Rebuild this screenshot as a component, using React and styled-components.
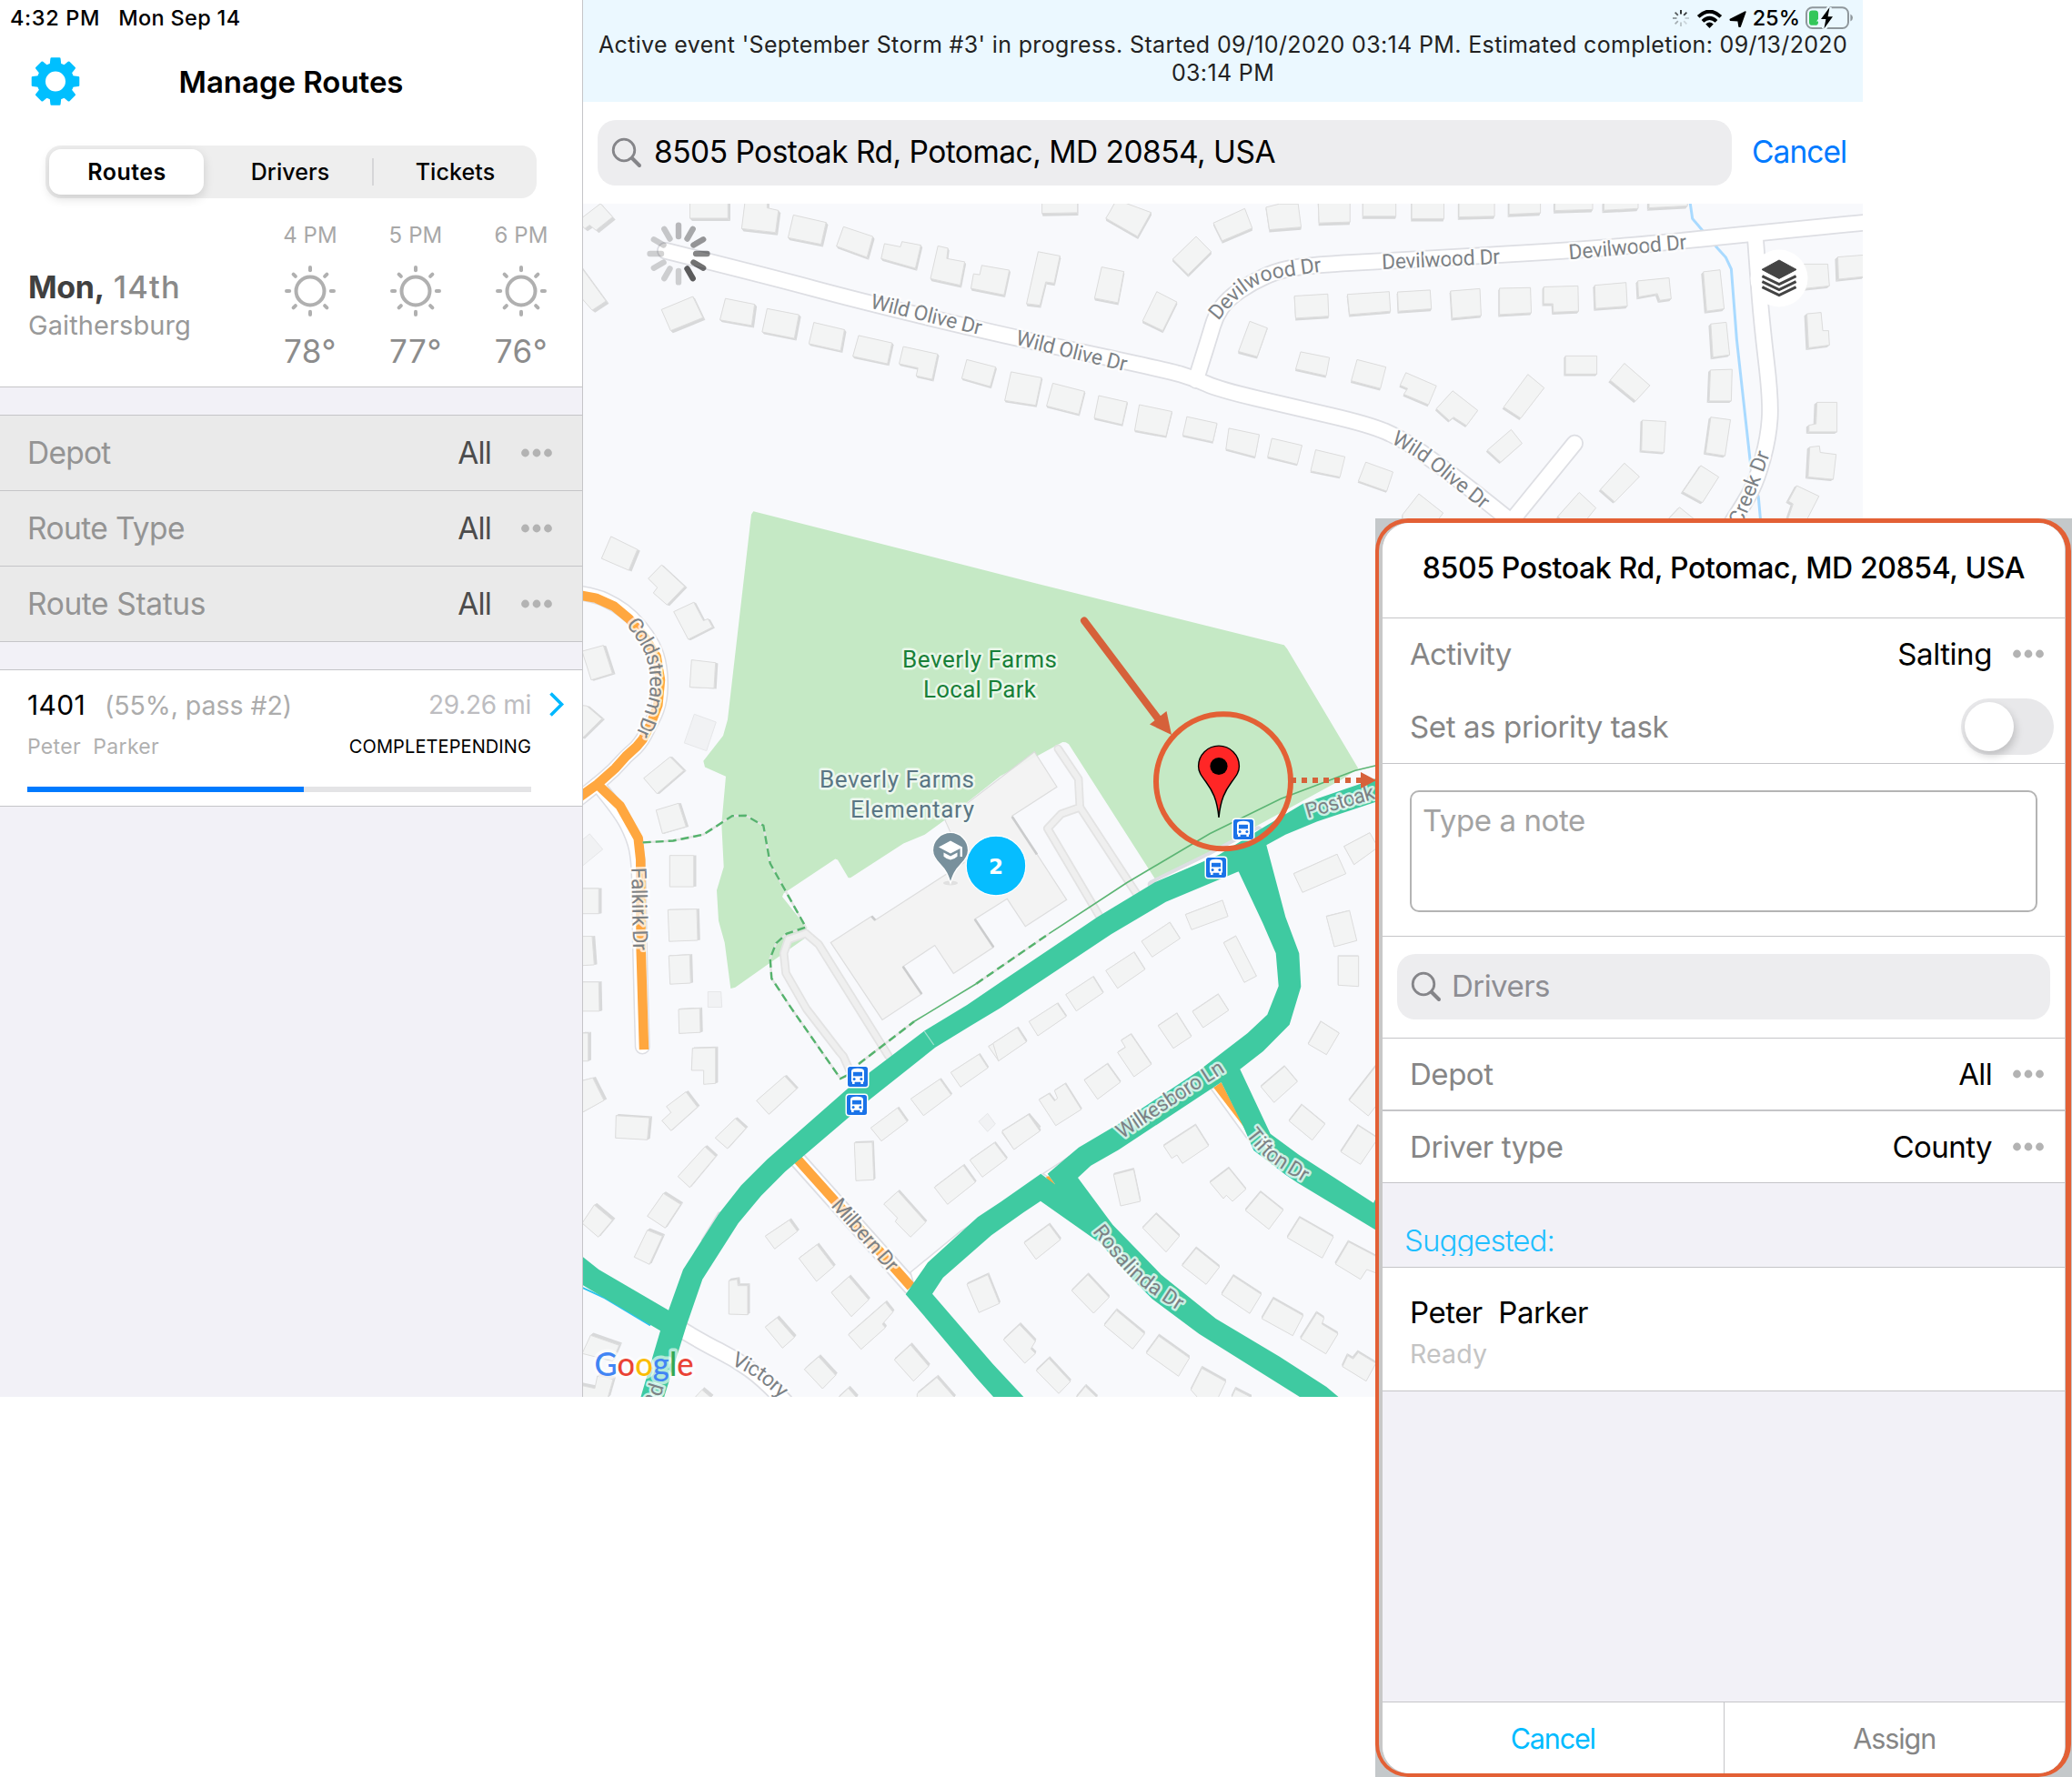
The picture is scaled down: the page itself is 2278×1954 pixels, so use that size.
import React from "react";
import styled, { createGlobalStyle, css } from "styled-components";

const GlobalStyle = createGlobalStyle`
  *, *::before, *::after { box-sizing: border-box; }
  html, body { margin: 0; padding: 0; background: #fff; }
  body { font-family: Inter, "Liberation Sans", sans-serif; color: #000; }
  button, input, textarea { font: inherit; border: 0; background: none; padding: 0; margin: 0; outline: 0; }
`;

const hairline = "#c5c5c8";
const groupBg = "#f2f1f7";
const orange = "#e36035";

const type = css`
  font-size: ${(p) => p.$size}px;
  font-weight: ${(p) => p.$weight || 400};
  letter-spacing: ${(p) => p.$track || 0}em;
  color: ${(p) => p.$color || "#000"};
  white-space: pre;
`;

const Text = styled.span`${type}`;

/* ---------- shell ---------- */

const Page = styled.div`
  position: relative;
  width: 2278px;
  height: 1954px;
  overflow: hidden;
  background: #fff;
`;

const Screen = styled.div`
  display: flex;
  width: 2048px;
  height: 1536px;
`;

const Sidebar = styled.aside`
  display: flex;
  flex-direction: column;
  width: 641px;
  flex: none;
  background: ${groupBg};
  border-right: 1px solid ${hairline};
`;

const Main = styled.main`
  display: flex;
  flex-direction: column;
  width: 1407px;
  flex: none;
`;

/* ---------- sidebar ---------- */

const SidebarTop = styled.header`
  display: flex;
  flex-direction: column;
  height: 426px;
  background: #fff;
  border-bottom: 1px solid ${hairline};
`;

const StatusLine = styled.div`
  display: flex;
  align-items: center;
  gap: 20px;
  height: 39px;
  padding-left: 11px;
`;

const TitleBar = styled.div`
  display: grid;
  grid-template-columns: 122px 1fr 122px;
  align-items: center;
  justify-items: center;
  height: 101px;
`;

const Segmented = styled.div`
  display: flex;
  align-items: center;
  height: 58px;
  margin: 20px 50px 0;
  padding-left: 4px;
  border-radius: 17px;
  background: #eee;
`;

const Segment = styled.button`
  ${type}
  width: ${(p) => p.$width}px;
  height: 50px;
  padding-left: ${(p) => p.$nudge || 0}px;
  line-height: 50px;
  text-align: center;
  border-radius: 13px;
  ${(p) => p.$active && css`
    background: #fff;
    box-shadow: 0 4px 12px rgba(0, 0, 0, 0.14);
  `}
`;

const SegmentDivider = styled.i`
  width: 2px;
  height: 30px;
  background: #d6d6d8;
`;

const Weather = styled.section`
  display: flex;
`;

const WeatherPlace = styled.div`
  display: flex;
  flex-direction: column;
  gap: 4px;
  width: 283px;
  padding: 78px 0 0 31px;
  line-height: 36px;
`;

const WeatherDate = styled.div`
  display: flex;
  gap: 10px;
  line-height: 40px;
`;

const Hour = styled.div`
  display: flex;
  flex-direction: column;
  align-items: center;
  width: 116px;
  padding-top: 26px;
  line-height: 40px;
`;

const HourLabel = styled.span`
  ${type}
  line-height: 30px;
  margin-bottom: 16px;
`;

const HourTemp = styled.span`
  ${type}
  margin-top: 16px;
`;

const Filters = styled.section`
  margin-top: 30px;
  border-top: 1px solid ${hairline};
`;

const FilterRow = styled.div`
  display: flex;
  align-items: center;
  height: 83px;
  padding: 0 33px 0 30px;
  background: #eaeaea;
  border-bottom: 1px solid ${hairline};
`;

const RowValue = styled.span`
  ${type}
  margin-left: auto;
  margin-right: ${(p) => p.$gap}px;
`;

const RouteCard = styled.article`
  display: flex;
  margin-top: 30px;
  height: 151px;
  background: #fff;
  border-top: 1px solid ${hairline};
  border-bottom: 1px solid ${hairline};
`;

const RouteBody = styled.div`
  display: flex;
  flex-direction: column;
  width: 554px;
  margin: 18px 20px 0 30px;
`;

const RouteLine = styled.div`
  display: flex;
  align-items: center;
  height: ${(p) => p.$height}px;
  margin-bottom: ${(p) => p.$gap}px;
  gap: 21px;
`;

const LineEnd = styled.span`
  ${type}
  margin-left: auto;
`;

const Progress = styled.div`
  height: 6px;
  background: #e4e4e6;
`;

const ProgressFill = styled.div`
  width: 304px;
  height: 6px;
  background: #007aff;
`;

const ChevronBox = styled.div`
  padding-top: 24px;
  line-height: 0;
`;

/* ---------- map column ---------- */

const Banner = styled.div`
  display: flex;
  flex-direction: column;
  height: 112px;
  background: #ebf8ff;
`;

const DeviceStatus = styled.div`
  display: flex;
  justify-content: flex-end;
  align-items: flex-end;
  height: 33px;
  padding-right: 11px;
  gap: 6px;
`;

const DevicePercent = styled.span`
  ${type}
  line-height: 26px;
`;

const BannerText = styled.p`
  ${type}
  margin: 1px 0 0;
  line-height: 31px;
  text-align: center;
`;

const SearchBar = styled.div`
  display: flex;
  align-items: center;
  height: 112px;
  padding-left: 16px;
  background: #fff;
`;

const SearchField = styled.div`
  display: flex;
  align-items: center;
  width: ${(p) => p.$width}px;
  height: 72px;
  padding-left: 15px;
  gap: ${(p) => p.$gap}px;
  border-radius: 20px;
  background: #ededef;
`;

const SearchText = styled.span`
  ${type}
  margin-top: -3px;
`;

const CancelLink = styled.a`
  ${type}
  margin: -3px 0 0 22px;
`;

const MapView = styled.svg`
  display: block;
  width: 1407px;
  height: 1312px;
`;

/* ---------- assignment panel, lies over the screen ---------- */

const Panel = styled.section`
  position: absolute;
  left: 1512px;
  top: 570px;
  width: 766px;
  height: 1384px;
  padding-right: 1px;
  background: #c4c8ca;
`;

const PanelFrame = styled.div`
  height: 100%;
  border: solid ${orange};
  border-width: 5px 6px 4px 4px;
  border-radius: 36px;
  background: #c8c8c8;
  overflow: hidden;
`;

const PanelContent = styled.div`
  display: flex;
  flex-direction: column;
  height: 100%;
  margin-left: 4px;
  border-right: 1px solid ${hairline};
  border-radius: 30px;
  background: ${groupBg};
  overflow: hidden;
`;

const PanelSection = styled.div`
  display: flex;
  flex-direction: ${(p) => (p.$center ? "row" : "column")};
  align-items: ${(p) => (p.$center ? "center" : "stretch")};
  justify-content: ${(p) => (p.$center ? "center" : "flex-start")};
  flex: none;
  height: ${(p) => p.$height}px;
  padding: ${(p) => p.$pad || "0"};
  background: ${(p) => p.$bg || "#fff"};
  border-bottom: ${(p) => p.$line || 1}px solid ${hairline};
`;

const PanelRow = styled.div`
  display: flex;
  align-items: center;
  height: ${(p) => p.$height}px;
  padding-left: 30px;
  padding-right: ${(p) => p.$right || 23}px;
`;

const Toggle = styled.div`
  width: 102px;
  height: 62px;
  margin-left: auto;
  padding: 4px;
  border-radius: 31px;
  background: #e8e8ea;
`;

const Knob = styled.div`
  width: 54px;
  height: 54px;
  border-radius: 50%;
  background: #fff;
  box-shadow: 2px 5px 10px rgba(0, 0, 0, 0.18);
`;

const NoteBox = styled.div`
  ${type}
  width: 690px;
  height: 134px;
  padding: 11px 12px;
  line-height: 40px;
  border: 2px solid #b4b4b4;
  border-radius: 10px;
`;

const GroupTitle = styled.h3`
  ${type}
  height: 34px;
  margin: 0;
  line-height: 35px;
  overflow: hidden;
`;

const PersonName = styled.div`
  ${type}
  line-height: 40px;
`;

const PersonState = styled.div`
  ${type}
  margin-top: 8px;
  line-height: 36px;
`;

const PanelFooter = styled.footer`
  display: flex;
  height: 79px;
  margin-top: auto;
  background: #fff;
  border-top: 1px solid ${hairline};
`;

const FooterButton = styled.button`
  ${type}
  flex: 1;
  padding-top: 2px;
  line-height: 76px;
  text-align: center;
  & + & { border-left: 1px solid ${hairline}; }
`;

/* ---------- icons ---------- */

const Gear = () => (
  <svg width="54" height="54" viewBox="-27 -26.5 54 54" fill="#00bfff">
    {[0, 45, 90, 135, 180, 225, 270, 315].map((a) => (
      <path key={a} transform={`rotate(${a})`} d="M-6.5 -17 L-5.6 -25 Q-5.5 -26.3 -4.4 -26.3 H4.4 Q5.5 -26.3 5.6 -25 L6.5 -17 Z" />
    ))}
    <path fillRule="evenodd" d="M0 -20.5 A20.5 20.5 0 1 1 0 20.5 A20.5 20.5 0 1 1 0 -20.5 Z M0 -11 A11 11 0 1 0 0 11 A11 11 0 1 0 0 -11 Z" />
  </svg>
);

const Sun = () => (
  <svg width="60" height="60" viewBox="-30 -30 60 60" fill="none" stroke="#b0b0b0" strokeWidth="4">
    <circle r="15.5" />
    {[0, 45, 90, 135, 180, 225, 270, 315].map((a) => (
      <path key={a} transform={`rotate(${a})`} strokeLinecap="round" d="M0 -22.8 V-26" />
    ))}
  </svg>
);

const Dots = () => (
  <svg width="34" height="10" viewBox="0 0 34 10" fill="#b3b3b3">
    <circle cx="4.5" cy="5" r="4.4" />
    <circle cx="17" cy="5" r="4.4" />
    <circle cx="29.5" cy="5" r="4.4" />
  </svg>
);

const Chevron = () => (
  <svg width="17" height="27" viewBox="0 0 17 27" fill="none" stroke="#00b8ff" strokeWidth="3.6">
    <path d="M1.5 1.5 L13.5 13.5 L1.5 25.5" />
  </svg>
);

const Magnifier = () => (
  <svg width="34" height="34" viewBox="0 0 34 34" fill="none" stroke="#858589" strokeWidth="2.8">
    <circle cx="14" cy="14" r="11.8" />
    <path strokeWidth="4" strokeLinecap="round" d="M23 23 L31 31" />
  </svg>
);

const BusySmall = () => (
  <svg width="22" height="22" viewBox="-11 -9 22 22" strokeWidth="1.8">
    {["#1c1d1e", "#3a3d3f", "#c2ccd2", "#cbd5db", "#b8c2c8", "#a4adb2", "#8d9599", "#555a5d"].map((c, i) => (
      <path key={i} transform={`rotate(${i * 45})`} stroke={c} d="M0 -4.5 V-9" />
    ))}
  </svg>
);

const Wifi = () => (
  <svg width="29" height="22" viewBox="0 0 29 22" fill="none" stroke="#000" strokeWidth="3.9">
    <path d="M2.2 7.4 Q14.5 -4.2 26.8 7.4" />
    <path d="M7 12.4 Q14.5 5.4 22 12.4" />
    <path fill="#000" stroke="none" d="M10.2 15.4 Q14.5 11.8 18.8 15.4 L14.5 20 Z" />
  </svg>
);

const Locate = () => (
  <svg width="21" height="21" viewBox="0 0 21 21">
    <path stroke="#000" strokeWidth="1.4" strokeLinejoin="round" d="M19 1 L13.2 17.2 L12 17.2 L11 10.8 L2.4 10.2 L2.2 9.4 Z" />
  </svg>
);

const Battery = () => (
  <svg width="52" height="26" viewBox="0 0 52 26">
    <rect x="1" y="1.2" width="46" height="22.8" rx="6.5" fill="none" stroke="#8f979c" strokeWidth="2" />
    <path d="M49.4 8.6 Q52 10 52 12.6 Q52 15.2 49.4 16.6 Z" fill="#8f979c" />
    <rect x="4" y="4.4" width="10" height="16.4" rx="3.4" fill="#34c759" />
    <path d="M26.5 1 L17 14 H22.4 L20.4 24.5 L30 11.2 H24.6 Z" stroke="#ebf8ff" strokeWidth="5" />
    <path d="M26.5 1 L17 14 H22.4 L20.4 24.5 L30 11.2 H24.6 Z" />
  </svg>
);

/* ---------- map ---------- */

// Each survey sheet has its own origin and scale; points are stored in sheet units.
const SHEETS = {
  nw: [640, 0, 1568 / 720, 2.8],
  ne: [1340, 0, 1568 / 720, 1568 / 580],
  w: [640, 550, 3, 1568 / 620],
  mid: [1100, 650, 3, 3],
  sw: [640, 1080, 3, 3],
  se: [1100, 1080, 3, 3],
};

const project = (sheet, text) => {
  const [ox, oy, sx, sy] = SHEETS[sheet];
  return text.trim().split(/\s+/).map((pair) => {
    const [x, y] = pair.split(",").map(Number);
    return [+(ox + x / sx).toFixed(1), +(oy + y / sy).toFixed(1)];
  });
};

const join = (pts) => pts.map((p) => p.join(",")).join(" ");

// "sheet:points|sheet:points" → one run of points
const trace = (spec) =>
  spec.split("|").flatMap((part) => {
    const [sheet, text] = part.split(":");
    return project(sheet.trim(), text);
  });

const toPath = (spec) => "M" + trace(spec).map((p) => p.join(" ")).join(" L");

// Smooths corners by running quadratic curves through the segment midpoints.
const toCurve = (spec) => {
  const p = trace(spec);
  let d = `M${p[0].join(" ")}`;
  for (let i = 1; i < p.length - 1; i++) {
    const last = i === p.length - 2;
    const end = last ? p[i + 1] : [(p[i][0] + p[i + 1][0]) / 2, (p[i][1] + p[i + 1][1]) / 2];
    d += ` Q${p[i].join(" ")} ${end.join(" ")}`;
  }
  if (p.length === 2) d += ` L${p[1].join(" ")}`;
  return d;
};

const HOUSES = {
  nw: `-10,680 44,627 73,668 33,709 18,693 6,704
258,610 349,610 349,672 258,672
390,620 443,620 443,640 470,648 463,716 382,704
506,662 584,685 572,752 493,732
626,698 696,728 682,792 609,758
724,750 762,760 766,744 811,755 798,826 716,796
852,757 876,764 873,796 916,806 905,878 834,858
957,817 1023,832 1010,908 931,888 937,843 952,846
1092,775 1144,788 1130,872 1110,868 1096,940 1064,935
1101,610 1186,610 1186,655 1101,657
1244,822 1297,836 1283,932 1227,918
1290,620 1362,654 1330,728 1254,672 1262,655 1275,625
1470,728 1506,775 1451,845 1414,798
1376,898 1424,930 1390,1018 1342,988
-5,818 57,927 24,955 -10,905
265,913 289,978 212,1018 190,953
343,919 413,937 406,1002 330,985
443,950 519,969 508,1042 431,1022
555,993 628,1015 619,1080 543,1058
662,1033 742,1056 731,1120 648,1097
769,1067 851,1090 838,1168 800,1157 804,1133 759,1120
921,1107 990,1130 977,1190 909,1165
1027,1145 1100,1163 1086,1248 1012,1233
1127,1180 1203,1205 1189,1275 1112,1250
1237,1218 1305,1238 1293,1307 1226,1287
1334,1246 1412,1267 1398,1343 1323,1325
1448,1283 1520,1303 1510,1360 1438,1340`,
  ne: `-13,663 62,620 80,678 8,716
113,616 145,606 190,606 197,675 121,683
238,600 314,600 314,660 240,663
345,600 424,600 424,643 345,643
462,600 539,600 539,650 462,650
575,600 660,600 660,643 575,645
695,600 770,600 770,633 695,637
805,600 895,600 895,623 805,626
922,600 1004,600 1004,620 922,625
1030,600 1122,600 1122,612 1030,618
181,880 261,874 263,940 184,946
308,875 408,867 411,925 313,935
428,868 506,862 509,918 430,925
555,865 625,858 628,938 559,946
672,857 746,855 748,930 672,935
778,853 860,850 861,925 801,928 800,903 778,903
900,848 975,840 978,910 902,917
1003,835 1078,826 1083,888 1056,893 1050,873 1005,883
1160,808 1200,802 1210,918 1168,925
1178,963 1215,958 1223,1055 1183,1062
1177,1100 1229,1098 1227,1192 1174,1192
1178,1240 1225,1248 1212,1355 1166,1346
1154,1384 1197,1418 1158,1494 1111,1462
1103,1508 1140,1545 1075,1545
74,955 116,975 92,1060 47,1045
196,1046 265,1063 257,1117 184,1097
331,1069 400,1091 387,1155 317,1132
448,1108 521,1147 502,1203 443,1172 452,1155 434,1145
560,1162 620,1220 593,1265 562,1240 552,1250 521,1215
740,1113 779,1153 723,1243 682,1210
700,1277 726,1318 675,1374 643,1338
830,1058 905,1058 905,1112 830,1112
971,1080 1032,1146 998,1192 937,1130
1014,1249 1070,1253 1066,1345 1012,1340
971,1377 1007,1417 948,1492 914,1455
863,1464 903,1510 880,1545 820,1545 812,1535
24,1273 97,1292 87,1358 17,1335
127,1303 199,1324 188,1380 117,1358
232,1337 302,1358 290,1418 220,1400
352,1374 417,1403 402,1460 334,1430
479,1468 537,1525 525,1545 440,1545 440,1530
1395,785 1458,785 1462,850 1400,858
1482,764 1545,758 1545,822 1484,830
1408,933 1442,929 1446,983 1460,983 1462,1026 1412,1034
1432,1196 1480,1196 1480,1284 1413,1284 1413,1264 1430,1260
1415,1329 1438,1326 1440,1345 1478,1351 1471,1425 1411,1418
1384,1444 1437,1475 1408,1545 1362,1545 1375,1498 1364,1490`,
  w: `95,101 182,137 154,195 64,162
262,180 338,240 280,291 235,258 248,243 218,218
368,284 400,335 415,330 430,353 350,387 302,310
361,444 440,452 435,523 355,520
0,420 70,404 100,482 30,500
-10,570 15,572 65,608 0,662
203,773 290,714 335,752 247,816
244,862 318,843 343,908 265,927
289,988 368,988 368,1075 289,1075
0,1080 55,1080 55,1150 0,1150
283,1139 378,1137 381,1224 287,1227
0,1213 33,1213 40,1292 0,1294
286,1267 355,1264 358,1343 290,1346
0,1340 55,1340 57,1421 0,1421
318,1416 388,1413 390,1480 320,1483
0,1482 20,1482 20,1560 0,1560`,
  sw: `364,218 440,216 440,334 401,337 401,291 361,291
0,325 35,316 72,390 0,430
342,362 380,412 293,490 263,457 293,430 278,410
112,440 222,447 215,520 110,514
668,310 707,352 616,436 575,391
505,450 540,482 479,549 439,514
405,543 440,575 355,677 316,641
268,697 325,733 274,811 215,772
40,735 100,785 53,841 0,795
215,818 265,838 222,931 172,907
898,530 957,528 962,652 903,655
1040,415 1072,460 987,524 952,481
1180,320 1217,372 1126,440 1084,385
1309,238 1338,283 1248,346 1216,298
1437,152 1465,195 1373,259 1340,212
1473,437 1510,480 1425,552 1385,497
1360,530 1400,583 1320,643 1279,587
1257,605 1297,660 1205,733 1162,677
1042,690 1133,792 1083,841 1033,790 1040,778 995,732
683,785 710,822 635,880 604,838
775,866 830,938 773,987 715,911
880,972 945,1048 888,1103 822,1024
1000,1057 1025,1088 990,1128 1000,1140 920,1211 878,1163
484,985 512,980 514,1001 546,1001 546,1097 484,1095
643,1107 700,1172 661,1207 604,1138
780,1236 836,1297 793,1341 733,1277
1083,1197 1143,1267 1093,1316 1030,1246
1170,1304 1228,1370 1105,1370 1105,1358
878,1340 905,1370 845,1370
395,1345 425,1370 372,1370
1338,965 1376,1060 1309,1090 1269,997
1443,1130 1495,1185 1480,1210 1495,1225 1460,1257 1390,1180
28,1165 122,1198 100,1250 0,1225
50,1300 102,1310 85,1370 -5,1370 -5,1330 42,1340`,
  mid: `610,1067 732,1020 750,1073 630,1117
465,1155 558,1093 592,1146 500,1207
347,1252 440,1191 476,1248 386,1310
215,1331 305,1272 338,1325 250,1385
94,1420 187,1360 216,1403 123,1467
-25,1492 55,1440 85,1487 -7,1550
736,1160 776,1138 844,1270 804,1291
633,1387 718,1330 752,1383 668,1440
520,1434 581,1393 629,1469 570,1508
967,932 1110,868 1139,932 996,994
1133,842 1218,797 1245,845 1166,902
1075,1073 1151,1054 1175,1153 1101,1173
1114,1204 1181,1204 1181,1304 1114,1300
1057,1420 1117,1458 1075,1529 1015,1494`,
  se: `386,232 412,215 398,192 430,172 497,271 440,312
276,323 352,270 395,330 320,386
127,388 160,368 178,392 188,383 178,358 213,335 266,420 182,473
5,492 92,437 130,491 44,552
538,540 643,472 686,540 600,598 582,570 565,581
373,635 439,618 461,723 396,738
859,345 937,278 979,328 902,397
994,405 1070,468 1028,521 952,458
1240,275 1150,390 1213,441 1245,400
1180,473 1245,515 1187,601 1123,560
753,614 809,683 765,723 745,703 735,714 691,661
858,693 932,752 885,815 808,753
987,777 1098,840 1061,910 946,843
1148,857 1240,905 1240,960 1208,948 1187,980 1105,930
513,765 590,838 546,890 469,811
645,878 722,940 678,997 599,935
768,970 860,1030 822,1093 729,1030
900,1045 998,1100 964,1166 862,1110
1043,1092 1067,1108 1060,1128 1113,1160 1073,1226 990,1176
1180,1222 1238,1257 1206,1316 1128,1268 1145,1232 1163,1243
288,965 358,1040 307,1092 235,1018
382,1083 475,1160 436,1210 342,1132
522,1168 623,1240 587,1300 481,1224
664,1274 743,1318 718,1370 650,1370 628,1345
160,1242 230,1318 192,1357 118,1282
78,860 160,800 197,850 117,914
280,1334 318,1370 250,1370
775,1343 828,1370 762,1370`,
};

const SHEDS = [
  "w:370,595 442,617 410,697 337,675",
  "w:0,945 25,928 68,971 0,1018",
  "w:415,1367 458,1367 461,1410 415,1410",
  "sw:1337,433 1363,468 1337,493 1308,460",
];

const VIEW_CENTRE = [1345, 880];

const House = ({ pts }) => {
  const [cx, cy] = pts[0];
  const dx = (VIEW_CENTRE[0] - cx) * 0.0046;
  const dy = (VIEW_CENTRE[1] - cy) * 0.0046;
  const base = pts.map(([x, y]) => [x + dx, y + dy]);
  return (
    <>
      {pts.map((p, i) => {
        const j = (i + 1) % pts.length;
        return <polygon key={i} fill="#d8d9da" points={join([p, pts[j], base[j], base[i]])} />;
      })}
      <polygon points={join(pts)} fill="#f3f4f4" stroke="#dddddd" strokeWidth="1" />
    </>
  );
};

const Houses = () =>
  Object.entries(HOUSES).flatMap(([sheet, rows]) =>
    rows.split("\n").map((row, i) => <House key={sheet + i} pts={project(sheet, row)} />)
  );

const ROADS = [
  "nw:200,772 450,852 660,925 1000,1030 1400,1140 1467,1165|ne:0,1158 180,1210 360,1262 440,1305 530,1385 620,1470 700,1550",
  "ne:1560,660 1270,695 1120,715 850,745 400,775 230,788 150,800 80,838 20,890 -8,940 -22,1000 -55,1130",
  "ne:852,1318 700,1550",
  "ne:1284,695 1290,800 1300,960 1322,1190 1316,1300 1290,1420 1262,1490 1225,1560",
  "sw:300,1130 400,1190 500,1240 600,1310 670,1385",
  "sw:710,585 1085,1005",
  "w:-10,258 45,265 110,290 165,325 215,375 250,430 262,500 255,570 225,625 190,680 145,712 105,750 50,790 -10,830",
  "w:50,790 125,865 170,940 185,1000 188,1100 190,1250 199,1520",
];

const LANES = [
  "w:738,1205 680,1222 665,1260 672,1315 740,1415 850,1535|sw:862,245 882,290",
  "w:738,1205 780,1235 1010,1545",
  "mid:190,520 257,620 262,713 200,735 155,783 325,1070",
  "mid:262,713 450,1000",
];

const ORANGE_ROADS = [
  "w:-10,264 45,272 105,295 155,330 205,380 245,435 258,500 250,570 225,625 200,665 180,685 145,712 110,745 50,790 -10,827",
  "w:50,790 125,850 185,940 193,1000 193,1100 194,1250 204,1528",
  "sw:705,578 830,718 1085,1005",
];

const TEAL_ROADS = [
  "sw:193,1370 258,1150 20,1010 -5,995 -5,900 55,948 285,1082 333,948 450,765 525,670 610,585 875,352 945,300 1130,160 1270,75 1380,0|mid:320,1075 510,960 720,870 850,790 1000,700 1245,616 1245,693 1045,760 940,803 877,838 785,925 545,1025 365,1132 0,1375|sw:1280,145 1165,215 945,390 670,625 590,705 515,795 397,980 345,1130 270,1370",
  "mid:700,925 785,925 865,1095 908,1195 917,1303 880,1397|se:815,168 650,295 385,470 258,545 155,632 181,668 133,632 0,725|sw:1305,775 1140,925 1067,1030 1140,1115 1300,1305 1358,1370 1458,1370 1355,1260 1155,1028 1190,975 1350,835 1500,728|se:0,810 132,722 330,862 420,965 500,1045 655,1160 990,1370 1117,1370 1075,1335 920,1235 710,1110 530,965 370,800 255,645 298,605 390,553 728,330 800,475 835,555 940,635 980,662 1245,822 1245,700 1230,728 985,570 890,500 790,287 866,228 953,140|mid:991,1305 985,1195 940,1075 877,838 860,800",
];

const PARK =
  "w:565,31 1500,232|mid:935,178 945,190 1180,585 1125,622 1000,690 850,772 720,855 515,958 225,505 215,499 205,498 0,610|w:1195,890 1130,930 1060,955 885,1050 878,1050 843,1000 835,998 665,1093 660,1103 740,1188 740,1215 505,1355 490,1358 470,1230 450,1170 444,1085 467,1020 460,900 474,768 405,742 400,725 465,655 480,610 558,40";

const SCHOOL =
  "w:820,1230 955,1157 967,1168 1260,1008 1197,890|mid:112,530 186,646 38,742 218,1018 82,1106 22,1015|w:1295,1165 1357,1243 1225,1316 1163,1238 1058,1297 1120,1373 990,1445";

const STREETS = [
  ["wo1", "Wild Olive Dr", "nw:688,948 990,1043", 125],
  ["wo2", "Wild Olive Dr", "nw:1036,1060 1340,1156", 125],
  ["wo3", "Wild Olive Dr", "ne:411,1316 468,1352 552,1437 645,1530", 126],
  ["dw1", "Devilwood Dr", "ne:-2,955 40,890 95,842 150,822 260,806", 132],
  ["dw2", "Devilwood Dr", "ne:391,800 700,782", 130],
  ["dw3", "Devilwood Dr", "ne:839,771 1150,737", 130],
  ["cr", "Creek Dr", "ne:1251,1565 1285,1470 1328,1320", 86],
  ["mb", "Milbern Dr", "sw:819,738 1040,990", 98],
  ["vi", "Victory", "sw:489,1260 560,1295 610,1333 690,1405", 68],
  ["wk", "Wilkesboro Ln", "se:402,518 560,408 770,278", 136],
  ["tf", "Tifton Dr", "se:808,503 852,562 918,614 1040,683", 84],
  ["rs", "Rosalinda Dr", "se:302,822 368,908 468,1013 620,1105", 130],
  ["po", "Postoak", "mid:1013,749 1270,675", 78],
  ["fk", "Falkirk Dr", "w:163,1022 169,1280", 91],
  ["cs", "Coldstream Dr", "w:144,345 187,392 216,442 226,500 220,570 165,675", 131],
];

const MapText = styled.text`
  font-family: Roboto, "Liberation Sans", sans-serif;
  font-size: ${(p) => p.$size || 23}px;
  font-weight: ${(p) => p.$weight || 400};
  fill: ${(p) => p.$color || "#7c8185"};
  stroke: ${(p) => p.$halo || "rgba(255, 255, 255, 0.72)"};
  stroke-width: 5px;
  stroke-linejoin: round;
  paint-order: stroke;
`;

const ClusterText = styled.text`
  font-family: "DejaVu Sans", sans-serif;
  font-size: 23px;
  font-weight: 700;
  fill: #fff;
`;

const LogoText = styled.text`
  font-family: Lato, "Liberation Sans", sans-serif;
  font-size: 37px;
  font-weight: 500;
  stroke: rgba(255, 255, 255, 0.6);
  stroke-width: 7px;
  stroke-linejoin: round;
  paint-order: stroke;
`;

const BusStop = ({ x, y }) => (
  <g transform={`translate(${x} ${y})`}>
    <rect x="-12.5" y="-12.5" width="25" height="25" rx="4" fill="#fff" />
    <rect x="-11" y="-11" width="22" height="22" rx="2.5" fill="#1a73e8" />
    <path fill="#fff" d="M-7 -6 Q-7 -9.3 0 -9.3 Q7 -9.3 7 -6 V5.5 H6 V8 H3.4 V5.8 H-3.4 V8 H-6 V5.5 H-7 Z" />
    <rect x="-5" y="-5.2" width="10" height="4.6" fill="#1a73e8" />
    <circle cx="-3.9" cy="2.6" r="1.5" fill="#1a73e8" />
    <circle cx="3.9" cy="2.6" r="1.5" fill="#1a73e8" />
  </g>
);

const Spinner = () => (
  <g transform="translate(746 279)" strokeWidth="6.4" strokeLinecap="round" stroke="#000">
    {[0.26, 0.32, 0.4, 0.47, 0.55, 0.63, 0.17, 0.17, 0.17, 0.17, 0.18, 0.2].map((o, i) => (
      <path key={i} transform={`rotate(${i * 30})`} d="M0 -19 V-31.4" opacity={o} />
    ))}
  </g>
);

const LayersButton = () => (
  <g transform="translate(1956 306)">
    <circle r="31.5" fill="#fff" />
    <path d="M0 -20 L19 -9.6 L0 0.4 L-19 -9.6 Z" fill="#444" stroke="#444" strokeWidth="1" strokeLinejoin="round" />
    <g fill="none" stroke="#444" strokeWidth="3">
      <path d="M-18.6 -2.4 L0 6.6 L18.6 -2.4" />
      <path d="M-18.6 3.6 L0 12.6 L18.6 3.6" />
      <path d="M-18.6 9.6 L0 18.6 L18.6 9.6" />
    </g>
  </g>
);

const Annotations = () => (
  <g>
    <path d="M1192 682.5 L1273 790" stroke="#d6613a" strokeWidth="8" strokeLinecap="round" />
    <path d="M1288 808 L1264 796.5 L1282.5 782 Z" fill="#d6613a" />
    <circle cx="1345" cy="859.3" r="74" fill="none" stroke={orange} strokeWidth="6" />
    <path d="M1419 858 H1496" stroke="#d6613a" strokeWidth="6" strokeDasharray="6 6" />
    <path d="M1496 849 L1513 858 L1496 867 Z" fill="#d6613a" />
  </g>
);

const Map = () => (
  <MapView viewBox="641 224 1407 1312">
    <rect x="641" y="224" width="1407" height="1312" fill="#f8f9fc" />
    <Houses />
    {SHEDS.map((s, i) => (
      <polygon key={i} points={join(trace(s))} fill="#f1f2f4" stroke="#e6e7e9" />
    ))}
    <polygon points={join(trace(PARK))} fill="#c5e9c5" />
    <polygon points={join(trace(SCHOOL))} fill="#f3f3f3" stroke="#dcdcdc" strokeWidth="1.2" opacity="0.93" />
    <g stroke="#cbcccd" strokeWidth="2.6" fill="none">
      <path d={toPath("w:955,1157 967,1168")} />
      <path d={toPath("w:1295,1165 1357,1243")} />
      <path d={toPath("w:1058,1297 1120,1373")} />
      <path d={toPath("w:1418,880 1500,985")} />
    </g>
    <path d={toPath("ne:1128,600 1134,650 1160,688 1194,738 1214,765 1227,800 1240,1010 1274,1390 1292,1478 1298,1560")} fill="none" stroke="#a9daff" strokeWidth="3" />
    <g fill="none" strokeLinejoin="round" strokeLinecap="round">
      {LANES.map((d, i) => <path key={i} d={toPath(d)} stroke="#e3e3e3" strokeWidth="9.5" />)}
      {LANES.map((d, i) => <path key={i} d={toPath(d)} stroke="#efefef" strokeWidth="6" />)}
      {ROADS.map((d, i) => <path key={i} d={toCurve(d)} stroke="#dddee3" strokeWidth={i > 5 ? 17 : 19.5} />)}
      <path d={toPath("mid:500,968 700,870 850,790")} stroke="#dddee3" strokeWidth="10" />
      {ROADS.map((d, i) => <path key={i} d={toCurve(d)} stroke="#fff" strokeWidth={i > 5 ? 14 : 16} />)}
      <path d={toPath("mid:520,968 700,880 850,800")} stroke="#fff" strokeWidth="8" />
    </g>
    <polygon points={join(trace("sw:1083,957 1250,820 1300,790 1100,1020"))} fill="#fff" stroke="#dddee3" strokeWidth="1.6" />
    <polygon points={join(trace("se:140,632 235,570 300,600 200,668"))} fill="#fff" stroke="#dddee3" strokeWidth="1.6" />
    <polygon points={join(trace("sw:395,850 450,760 480,760 420,860"))} fill="#fff" stroke="#dddee3" strokeWidth="1.6" />
    <polygon points={join(trace("se:693,350 820,525 835,500 740,340"))} fill="#fff" stroke="#dddee3" strokeWidth="1.6" />
    <polygon points={join(trace("se:703,348 728,330 810,490 795,468"))} fill="#ffa73f" />
    <polygon points={join(trace("se:150,642 160,640 190,680 158,658"))} fill="#ffa73f" />
    <g fill="none" stroke="#ffa73f" strokeWidth="10.5" strokeLinejoin="round">
      {ORANGE_ROADS.map((d, i) => <path key={i} d={toPath(d)} />)}
    </g>
    <g fill="none" strokeWidth="2.4">
      {[
        "w:200,952 300,947 400,930 495,878 540,877 598,905 620,1010 738,1188 675,1205 640,1232 620,1275 625,1330 690,1413|sw:852,318 885,302",
        "sw:912,270 1095,130",
        "mid:-80,1295 160,1130",
      ].map((d, i) => (
        <g key={i}>
          <path d={toPath(d)} stroke="#e2e4e2" />
          <path d={toPath(d)} stroke="#55b36d" strokeDasharray="9 5" />
        </g>
      ))}
      <path d={toPath("sw:1095,130 1300,5")} stroke="#5cb574" strokeWidth="1.6" />
      <path d={toPath("mid:160,1130 415,963 690,800 925,685 1170,592 1245,574")} stroke="#5cb574" strokeWidth="1.6" />
    </g>
    <path d={toPath("sw:-5,1005 75,1042 225,1132")} stroke="#2bc4ee" strokeWidth="2" fill="none" />
    {TEAL_ROADS.map((d, i) => <polygon key={i} points={join(trace(d))} fill="#3fcaa1" />)}
    <path d={toPath("sw:1129,162 1160,207")} stroke="#9fe3cf" strokeWidth="1.3" />

    {STREETS.map(([id, name, line, length]) => (
      <React.Fragment key={id}>
        <path id={id} d={toCurve(line)} fill="none" />
        <MapText>
          <textPath href={`#${id}`} textLength={length} lengthAdjust="spacing">{name}</textPath>
        </MapText>
      </React.Fragment>
    ))}
    <MapText transform="translate(722 1550) rotate(-73)">Rd</MapText>

    <MapText $size={26} $color="#188038" $halo="rgba(240,250,240,0.85)" x="992" y="734" textLength="170">Beverly Farms</MapText>
    <MapText $size={26} $color="#188038" $halo="rgba(240,250,240,0.85)" x="1015" y="767" textLength="124">Local Park</MapText>
    <MapText $size={26} $color="#5a7684" $halo="rgba(245,250,247,0.85)" x="901" y="866" textLength="170">Beverly Farms</MapText>
    <MapText $size={26} $color="#5a7684" $halo="rgba(245,250,247,0.85)" x="935" y="899" textLength="136">Elementary</MapText>

    <g transform="translate(1045 935)">
      <ellipse cy="36" rx="8" ry="2.5" fill="#000" opacity="0.08" />
      <path d="M0 36 C-3 27 -5 22 -11 16 C-17 10 -19.6 6 -19.6 0 A19.6 19.6 0 1 1 19.6 0 C19.6 6 17 10 11 16 C5 22 3 27 0 36 Z" fill="#78909c" stroke="#fff" strokeWidth="1.4" />
      <path d="M0 -10.5 L13 -3.5 V7 H10.6 V-2 L0 3.5 L-13 -3.5 Z" fill="#fff" />
      <path d="M-7.5 2.5 L0 6.5 L7.5 2.5 V6.8 Q0 14 -7.5 6.8 Z" fill="#fff" />
    </g>
    <circle cx="1095" cy="952" r="32.8" fill="#06bdff" stroke="#fff" strokeWidth="1.2" />
    <ClusterText x="1095" y="961" textAnchor="middle">2</ClusterText>

    <g transform="translate(1340 842.5)">
      <path d="M0 56.5 C-2 36 -7 27 -14 17.5 C-20 9.5 -22.4 6 -22.4 0 A22.4 22.4 0 1 1 22.4 0 C22.4 6 20 9.5 14 17.5 C7 27 2 36 0 56.5 Z" fill="#ff2626" stroke="#000" strokeWidth="1.4" />
      <circle r="9.6" />
    </g>
    <BusStop x={1367} y={912} />
    <BusStop x={1337} y={954} />
    <BusStop x={943} y={1184} />
    <BusStop x={942} y={1215} />
    <Annotations />
    <Spinner />
    <LayersButton />
    <LogoText x="653.5" y="1513" textLength="109" lengthAdjust="spacingAndGlyphs">
      <tspan fill="#4285f4">G</tspan>
      <tspan fill="#ea4335">o</tspan>
      <tspan fill="#fbbc05">o</tspan>
      <tspan fill="#4285f4">g</tspan>
      <tspan fill="#34a853">l</tspan>
      <tspan fill="#ea4335">e</tspan>
    </LogoText>
  </MapView>
);

/* ---------- screen ---------- */

const HOURS = [
  ["4 PM", "78°"],
  ["5 PM", "77°"],
  ["6 PM", "76°"],
];

const FILTERS = [
  ["Depot", -0.022],
  ["Route Type", -0.018],
  ["Route Status", -0.011],
];

const Routes = () => (
  <Sidebar>
    <SidebarTop>
      <StatusLine>
        <Text $size={23.5} $weight={500} $track={0.028}>4:32 PM</Text>
        <Text $size={23.5} $weight={500} $track={0.014}>Mon Sep 14</Text>
      </StatusLine>
      <TitleBar>
        <Gear />
        <Text $size={33} $weight={600} $track={-0.001}>Manage Routes</Text>
      </TitleBar>
      <Segmented>
        <Segment $active $size={25} $weight={600} $track={0.018} $width={170} $nudge={1}>Routes</Segment>
        <Segment $size={25} $weight={500} $track={0.003} $width={185} $nudge={5}>Drivers</Segment>
        <SegmentDivider />
        <Segment $size={25} $weight={500} $track={0.004} $width={179}>Tickets</Segment>
      </Segmented>
      <Weather>
        <WeatherPlace>
          <WeatherDate>
            <Text $size={34} $weight={700} $track={-0.01} $color="#404040">Mon,</Text>
            <Text $size={34.5} $weight={500} $track={0.035} $color="#8a8a8a">14th</Text>
          </WeatherDate>
          <Text $size={29} $track={0.003} $color="#999">Gaithersburg</Text>
        </WeatherPlace>
        {HOURS.map(([hour, temp]) => (
          <Hour key={hour}>
            <HourLabel $size={24} $track={0.005} $color="#a8a8a8">{hour}</HourLabel>
            <Sun />
            <HourTemp $size={35} $track={0.015} $color="#8c8c8c">{temp}</HourTemp>
          </Hour>
        ))}
      </Weather>
    </SidebarTop>
    <Filters>
      {FILTERS.map(([name, track]) => (
        <FilterRow key={name}>
          <Text $size={33.5} $track={track} $color="#949494">{name}</Text>
          <RowValue $size={33.5} $track={-0.025} $gap={33} $color="#4c4c4c">All</RowValue>
          <Dots />
        </FilterRow>
      ))}
    </Filters>
    <RouteCard>
      <RouteBody>
        <RouteLine $height={40} $gap={10}>
          <Text $size={30} $track={0.01}>1401</Text>
          <Text $size={28.5} $track={-0.002} $color="#acacac">(55%, pass #2)</Text>
          <LineEnd $size={28} $track={-0.011} $color="#bdbdc1">29.26 mi</LineEnd>
        </RouteLine>
        <RouteLine $height={32} $gap={28}>
          <Text $size={23} $track={0.013} $color="#b0b0b0">Peter  Parker</Text>
          <LineEnd $size={20} $track={0.005}>COMPLETEPENDING</LineEnd>
        </RouteLine>
        <Progress><ProgressFill /></Progress>
      </RouteBody>
      <ChevronBox><Chevron /></ChevronBox>
    </RouteCard>
  </Sidebar>
);

const ValueRow = ({ height, name, track, value, valueTrack }) => (
  <PanelRow $height={height}>
    <Text $size={33} $track={track} $color="#868686">{name}</Text>
    <RowValue $size={33} $track={valueTrack} $gap={23}>{value}</RowValue>
    <Dots />
  </PanelRow>
);

const AssignPanel = () => (
  <Panel>
    <PanelFrame>
      <PanelContent>
        <PanelSection $center $height={105} $pad="0 0 5px">
          <Text $size={32} $weight={500} $track={-0.0117}>8505 Postoak Rd, Potomac, MD 20854, USA</Text>
        </PanelSection>
        <PanelSection $height={160}>
          <ValueRow height={78} name="Activity" track={-0.02} value="Salting" valueTrack={-0.013} />
          <PanelRow $height={81} $right={12}>
            <Text $size={33} $track={-0.0115} $color="#868686">Set as priority task</Text>
            <Toggle><Knob /></Toggle>
          </PanelRow>
        </PanelSection>
        <PanelSection $height={190} $pad="29px 30px 0">
          <NoteBox $size={33} $track={-0.0124} $color="#a3a3a3">Type a note</NoteBox>
        </PanelSection>
        <PanelSection $height={112} $pad="19px 16px 0">
          <SearchField $width={718} $gap={11}>
            <Magnifier />
            <SearchText $size={33} $track={-0.0167} $color="#8e8e93">Drivers</SearchText>
          </SearchField>
        </PanelSection>
        <PanelSection $height={80} $line={2}>
          <ValueRow height={78} name="Depot" track={-0.014} value="All" valueTrack={-0.02} />
        </PanelSection>
        <PanelSection $height={79}>
          <ValueRow height={78} name="Driver type" track={-0.0125} value="County" valueTrack={-0.017} />
        </PanelSection>
        <PanelSection $height={93} $bg={groupBg} $pad="46px 0 0 24px">
          <GroupTitle $size={33} $weight={300} $track={-0.028} $color="#1fbfff">Suggested:</GroupTitle>
        </PanelSection>
        <PanelSection $height={136} $pad="29px 0 0 30px">
          <PersonName $size={33} $track={-0.015}>Peter  Parker</PersonName>
          <PersonState $size={28.5} $track={0.005} $color="#c4c4c4">Ready</PersonState>
        </PanelSection>
        <PanelFooter>
          <FooterButton $size={30.5} $track={-0.037} $color="#00bbff">Cancel</FooterButton>
          <FooterButton $size={30.5} $track={-0.035} $color="#868686">Assign</FooterButton>
        </PanelFooter>
      </PanelContent>
    </PanelFrame>
  </Panel>
);

export default function App() {
  return (
    <Page>
      <GlobalStyle />
      <Screen>
        <Routes />
        <Main>
          <Banner>
            <DeviceStatus>
              <BusySmall />
              <Wifi />
              <Locate />
              <DevicePercent $size={23.5} $weight={500}>25%</DevicePercent>
              <Battery />
            </DeviceStatus>
            <BannerText $size={25} $track={0.0142} $color="#222">
              {"Active event 'September Storm #3' in progress. Started 09/10/2020 03:14 PM. Estimated completion: 09/13/2020\n03:14 PM"}
            </BannerText>
          </Banner>
          <SearchBar>
            <SearchField $width={1247} $gap={13}>
              <Magnifier />
              <SearchText $size={33.5} $track={-0.0155}>8505 Postoak Rd, Potomac, MD 20854, USA</SearchText>
            </SearchField>
            <CancelLink $size={33.5} $track={-0.028} $color="#007aff">Cancel</CancelLink>
          </SearchBar>
          <Map />
        </Main>
      </Screen>
      <AssignPanel />
    </Page>
  );
}
